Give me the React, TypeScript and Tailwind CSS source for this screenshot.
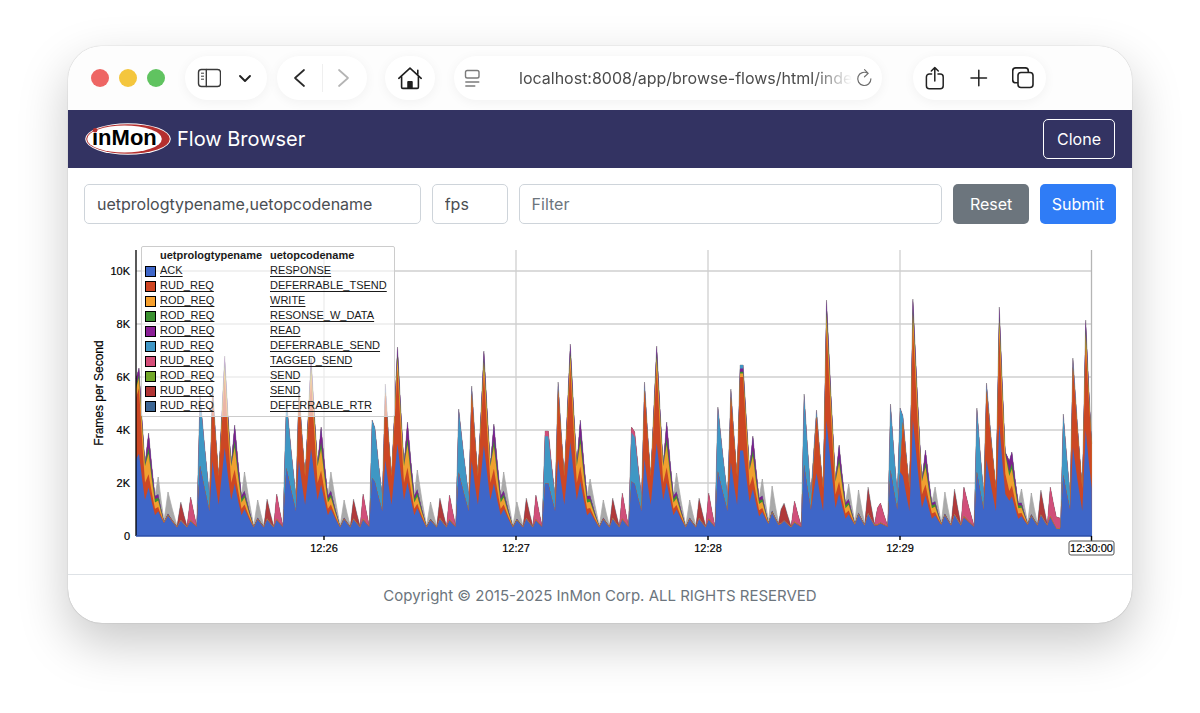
import type { ReactNode } from 'react'

const legend = [
  { type: 'ACK', opcode: 'RESPONSE', color: 'bg-[#3e66c8]' },
  { type: 'RUD_REQ', opcode: 'DEFERRABLE_TSEND', color: 'bg-[#cf4522]' },
  { type: 'ROD_REQ', opcode: 'WRITE', color: 'bg-[#f6a02d]' },
  { type: 'ROD_REQ', opcode: 'RESONSE_W_DATA', color: 'bg-[#3a9130]' },
  { type: 'ROD_REQ', opcode: 'READ', color: 'bg-[#8a1f96]' },
  { type: 'RUD_REQ', opcode: 'DEFERRABLE_SEND', color: 'bg-[#3f97c6]' },
  { type: 'RUD_REQ', opcode: 'TAGGED_SEND', color: 'bg-[#d44d78]' },
  { type: 'ROD_REQ', opcode: 'SEND', color: 'bg-[#73a829]' },
  { type: 'RUD_REQ', opcode: 'SEND', color: 'bg-[#b03434]' },
  { type: 'RUD_REQ', opcode: 'DEFERRABLE_RTR', color: 'bg-[#3c6694]' },
]

// Stacked bottom to top
const layers = [
  { name: 'response', fill: '#3e66c8' },
  { name: 'tsend', fill: '#cc4724' },
  { name: 'write', fill: '#f0a030' },
  { name: 'wdata', fill: '#3a9130' },
  { name: 'read', fill: '#7d1f8c' },
  { name: 'dsend', fill: '#3f97c4' },
  { name: 'tagged', fill: '#d04f7a' },
  { name: 'send', fill: '#b03a3a' },
  { name: 'rtr', fill: '#3d6794' },
  { name: 'other', fill: '#a9a9a9' },
]

// Cumulative share of each layer for a kind of sample
const mix: { [kind: string]: number[] } = {
  base: [0.9, 0.95, 0.95, 0.95, 0.95, 0.97, 0.98, 0.99, 0.99, 1],
  a: [0.5, 0.5, 0.5, 0.5, 0.5, 1, 1, 1, 1, 1],
  p: [0.5, 0.5, 0.5, 0.5, 0.5, 0.95, 1, 1, 1, 1],
  ab: [0.62, 0.63, 0.63, 0.63, 0.63, 1, 1, 1, 1, 1],
  b: [0.5, 0.95, 0.95, 0.95, 0.95, 1, 1, 1, 1, 1],
  bc: [0.52, 1, 1, 1, 1, 1, 1, 1, 1, 1],
  c: [0.49, 0.88, 0.94, 0.96, 1, 1, 1, 1, 1, 1],
  q: [0.5, 0.93, 0.95, 0.96, 0.98, 1, 1, 1, 1, 1],
  cd: [0.5, 0.74, 0.97, 0.99, 1, 1, 1, 1, 1, 1],
  d: [0.47, 0.6, 0.8, 0.86, 1, 1, 1, 1, 1, 1],
  de: [0.52, 0.68, 0.84, 0.92, 1, 1, 1, 1, 1, 1],
  e: [0.42, 0.49, 0.6, 0.65, 0.7, 0.7, 0.7, 0.7, 0.71, 1],
  low: [0.85, 0.89, 0.93, 0.94, 0.95, 0.95, 0.95, 0.95, 0.96, 1],
  f: [0.46, 0.47, 0.48, 0.49, 0.5, 0.5, 0.5, 0.5, 0.51, 1],
  g: [0.45, 0.46, 0.47, 0.47, 0.47, 0.47, 0.47, 0.98, 0.98, 1],
  h: [0.38, 0.4, 0.41, 0.41, 0.41, 0.41, 1, 1, 1, 1],
}

type Sample = [kind: string, x: number, height: number]

const PLOT_LEFT = 52
const PLOT_RIGHT = 1008
const BASE = 296
const PERIOD = 86.4
const FIRST = 112.7

// Bursts are 27 seconds apart; the peaks are named in the order they occur
function slowBurst(a: Sample[], b: number, c: Sample[], d: number, e: number, f: number, g: number, h: number): Sample[] {
  return [
    ...a, ['ab', 12.8, 40], ['b', 15.8, b], ['bc', 22, 60], ...c, ['cd', 34.5, 72], ['d', 38, d],
    ['de', 44.8, 40], ['e', 47.8, e], ['low', 57, 10], ['f', 61, f], ['low', 67.2, 10],
    ['g', 70.4, g], ['low', 77, 10], ['h', 80, h], ['base', 86.2, 10],
  ]
}

function fastBurst(a: number, b: Sample[], c: number, d: Sample[], e: number, f: number, g: number, h: Sample[]): Sample[] {
  return [
    ['a', 2.6, a], ['ab', 9.4, 42], ...b, ['bc', 21.6, 48], ['c', 25, c], ...d,
    ['de', 44, 33], ['e', 47.2, e], ['low', 53.4, 13], ['f', 57, f], ['low', 63.2, 12],
    ['g', 66.6, g], ['low', 73, 12], ...h, ['base', 86.2, 10],
  ]
}

const bursts: Sample[][] = [
  slowBurst([['a', 3.3, 141]], 150, [['c', 28, 180]], 111, 64, 36, 37, 42),
  slowBurst([['a', 3.3, 136]], 150, [['c', 28, 178]], 109, 64, 36, 37, 42),
  slowBurst([['a', 2.6, 116], ['a', 5.4, 108]], 152, [['c', 28, 189]], 114, 66, 34, 38, 41),
  slowBurst([['a', 2.8, 127]], 150, [['c', 28, 185]], 112, 64, 34, 38, 41),
  slowBurst([['p', 2.8, 105], ['p', 6, 105]], 154, [['c', 28, 192]], 116, 57, 36, 38, 43),
  slowBurst([['p', 2.8, 109], ['p', 6, 104]], 154, [['c', 28, 190]], 114, 63, 36, 38, 43),
  [
    ['a', 2.8, 129], ['ab', 12.4, 40], ['b', 15.8, 147], ['bc', 22, 60], ['q', 25, 171], ['q', 28, 171],
    ['cd', 34.5, 68], ['d', 37.8, 100], ['de', 44, 38], ['e', 47.2, 57], ['low', 53.4, 14], ['f', 57, 50],
    ['low', 63.4, 13], ['g', 66, 27], ['g', 69, 33], ['low', 76, 10], ['h', 79.4, 35], ['base', 86.2, 10],
  ],
  fastBurst(142, [['b', 15, 126]], 236, [['cd', 34, 56], ['d', 37.6, 91]], 52, 46, 49, [['h', 76, 28], ['h', 79, 33]]),
  fastBurst(132, [['a', 12.2, 128], ['b', 15, 120]], 237, [['cd', 34, 56], ['d', 37.6, 86]], 49, 44, 47, [['h', 76, 49]]),
  fastBurst(128, [['b', 12.2, 153]], 229, [['cd', 31, 84], ['d', 35, 75], ['d', 37.6, 84]], 47, 43, 46, [['h', 76, 49], ['h', 82, 19], ['h', 85.6, 18]]),
  [['a', 2.6, 122], ['ab', 9.4, 42], ['b', 12.2, 178], ['bc', 21.6, 48], ['c', 25, 216], ['bc', 31, 92]],
]

const lead: Sample[] = [
  ['c', 52, 157], ['c', 55, 168], ['cd', 61, 72], ['d', 64.6, 103], ['de', 71, 40], ['e', 74.2, 59], ['low', 80, 15],
  ['f', 84, 44], ['low', 93, 10], ['g', 96.8, 34], ['low', 103, 10], ['h', 106.6, 39], ['base', 112.7, 10],
]

const samples: Sample[] = [
  ...lead,
  ...bursts.flatMap((burst, i) => burst.map(([kind, x, h]): Sample => [kind, FIRST + i * PERIOD + x, h])),
]

// Cumulative heights, with an extra point that bows each long fall inwards
function expand() {
  const out: { x: number; tops: number[] }[] = []
  samples.forEach(([kind, x, h], i) => {
    const tops = mix[kind].map(share => share * h)
    if (i > 0) {
      const prev = out[out.length - 1]
      const last = prev.tops.length - 1
      if (prev.tops[last] - tops[last] > 20) {
        out.push({
          x: (prev.x + x) / 2,
          tops: tops.map((t, k) => t + (prev.tops[k] - t) * 0.47),
        })
      }
    }
    out.push({ x, tops })
  })
  return out
}

const points = expand()

function linePath(layer: number) {
  return 'M' + points.map(p => `${p.x.toFixed(1)},${(BASE - p.tops[layer]).toFixed(1)}`).join('L')
}

// Each area reaches down to the axis and is covered by the ones below it in the stack
function areaPath(layer: number) {
  return `${linePath(layer)}L${PLOT_RIGHT},${BASE}L${PLOT_LEFT},${BASE}Z`
}

const yTicks = [
  { label: '10K', y: 31 },
  { label: '8K', y: 84 },
  { label: '6K', y: 137 },
  { label: '4K', y: 190 },
  { label: '2K', y: 243 },
  { label: '0', y: 296 },
]

const xTicks = [
  { label: '12:26', x: 240 },
  { label: '12:27', x: 432 },
  { label: '12:28', x: 624 },
  { label: '12:29', x: 816 },
]

function Chart() {
  return (
    <svg className="block w-full h-auto" viewBox="0 0 1032 324" role="img" aria-label="Frames per second by operation">
      <g stroke="#cfcfcf" strokeWidth="1.3">
        {yTicks.slice(0, 5).map(t => (
          <line key={t.label} x1={PLOT_LEFT} x2={PLOT_RIGHT} y1={t.y} y2={t.y} />
        ))}
        {xTicks.map(t => (
          <line key={t.label} x1={t.x} x2={t.x} y1="10" y2={BASE} />
        ))}
        <line x1={PLOT_RIGHT - 0.5} x2={PLOT_RIGHT - 0.5} y1="10" y2={BASE} stroke="#b5b5b5" />
      </g>

      <path d={linePath(layers.length - 1)} fill="none" stroke="#555555" strokeOpacity="0.6" strokeWidth="0.6" strokeLinejoin="bevel" />
      {layers.map((layer, i) => (
        <path key={layer.name} d={areaPath(i)} fill={layer.fill} />
      )).reverse()}

      <line x1={PLOT_LEFT} x2={PLOT_LEFT} y1="10" y2={BASE} stroke="#000" strokeWidth="1.3" />
      <line x1={PLOT_LEFT} x2={PLOT_RIGHT} y1={BASE} y2={BASE} stroke="#2d4fa8" strokeWidth="1.4" />

      <g className="text-[11px] font-['Liberation_Sans',sans-serif]" fill="#000" stroke="#000" strokeWidth="0.2">
        {yTicks.map(t => (
          <text key={t.label} x="46" y={t.y + 4} textAnchor="end">{t.label}</text>
        ))}
        {xTicks.map(t => (
          <text key={t.label} x={t.x} y="312" textAnchor="middle">{t.label}</text>
        ))}
      </g>
      <g stroke="#000" strokeWidth="1.4">
        {xTicks.map(t => (
          <line key={t.label} x1={t.x} x2={t.x} y1={BASE} y2="300" />
        ))}
        <line x1={PLOT_RIGHT - 0.5} x2={PLOT_RIGHT - 0.5} y1={BASE} y2="301" />
      </g>

      <rect x="985" y="301" width="45" height="14" rx="2" fill="#fff" stroke="#555" />
      <text className="text-[11px] font-['Liberation_Sans',sans-serif]" x="1007.5" y="312" textAnchor="middle" stroke="#000" strokeWidth="0.2">
        12:30:00
      </text>
      <text
        className="text-[12px] font-['Liberation_Sans',sans-serif]"
        transform="translate(19 153) rotate(-90)"
        textAnchor="middle"
        stroke="#000"
        strokeWidth="0.2"
      >
        Frames per Second
      </text>
    </svg>
  )
}

function Legend() {
  return (
    <div className="absolute left-[57px] top-[6px] w-[254px] rounded-xs border border-[#cccccc] bg-white/60 pt-px pb-[3px] pl-[3px] font-['Liberation_Sans',sans-serif] text-[11px] leading-[15px] text-[#1a1a1a]">
      <table className="w-full text-left">
        <thead>
          <tr>
            <td className="w-[15px] p-0" />
            <th className="w-[110px] p-0 font-bold">uetprologtypename</th>
            <th className="p-0 font-bold">uetopcodename</th>
          </tr>
        </thead>
        <tbody>
          {legend.map(row => (
            <tr key={row.type + row.opcode}>
              <td className="p-0">
                <div className={`mt-px size-[11px] border border-black ${row.color}`} />
              </td>
              <td className="p-0"><a href="#" className="underline underline-offset-2">{row.type}</a></td>
              <td className="p-0"><a href="#" className="underline underline-offset-2">{row.opcode}</a></td>
            </tr>
          ))}
        </tbody>
      </table>
    </div>
  )
}

function Logo() {
  return (
    <svg className="h-8 w-[86px]" viewBox="0 0 86 32" aria-label="inMon">
      <ellipse cx="43" cy="16" rx="42.8" ry="15.8" fill="#fff" />
      <ellipse cx="43" cy="16" rx="41.8" ry="14.8" fill="#b5302f" />
      <ellipse cx="39.5" cy="16" rx="37.3" ry="13.4" fill="#fff" />
      <text x="7" y="22" className="text-[22px] font-bold font-['Liberation_Sans',sans-serif]" fill="#000">inMon</text>
      <circle cx="10.1" cy="7.2" r="2.3" fill="#b5302f" />
    </svg>
  )
}

function Pill({ className, children }: { className: string; children: ReactNode }) {
  return (
    <div className={`flex h-11 items-center rounded-full bg-white shadow-[0_2px_12px_rgba(0,0,0,0.05)] ${className}`}>
      {children}
    </div>
  )
}

function Icon({ label, className, children }: { label: string; className: string; children: ReactNode }) {
  return (
    <button type="button" aria-label={label} className={className}>
      <svg className="size-6" viewBox="0 0 24 24" fill="none" stroke="currentColor" strokeLinecap="round" strokeLinejoin="round" strokeWidth="1.4">
        {children}
      </svg>
    </button>
  )
}

function Toolbar() {
  return (
    <div className="flex h-16 items-center bg-[#fdfdfd] pl-[23px] pr-[86px]">
      <div className="flex gap-[10px]">
        <button type="button" aria-label="Close" className="size-[18px] rounded-full bg-[#ee6664]" />
        <button type="button" aria-label="Minimize" className="size-[18px] rounded-full bg-[#f4c63d]" />
        <button type="button" aria-label="Zoom" className="size-[18px] rounded-full bg-[#60c360]" />
      </div>

      {/* Sidebar */}
      <Pill className="ml-5 w-[82px] gap-3 px-3 text-[#3a3a3a]">
        <Icon label="Sidebar" className="">
          <rect x="1.5" y="3.5" width="22" height="17" rx="3" />
          <path d="M9.3 3.5v17" />
          <path d="M4.4 7.2h2.2M4.4 10.2h2.2M4.4 13.2h2.2" strokeWidth="1" />
        </Icon>
        <Icon label="Tab groups" className="text-[#222]">
          <path d="M7 10l5 5 5-5" strokeWidth="1.9" />
        </Icon>
      </Pill>

      {/* History */}
      <Pill className="ml-[10px] w-[90px] justify-between px-[11px]">
        <Icon label="Back" className="text-[#2a2a2a]">
          <path d="M16 4l-9 8 9 8" strokeWidth="1.7" />
        </Icon>
        <span className="h-7 w-px bg-[#efefef]" />
        <Icon label="Forward" className="text-[#b4b4b4]">
          <path d="M7 4l9 8-9 8" strokeWidth="1.7" />
        </Icon>
      </Pill>

      <Pill className="ml-[18px] w-[50px] justify-center text-[#1f1f1f]">
        <Icon label="Home" className="">
          <path d="M.8 12.3L12 2.2l11.2 10.1M19.8 8.6V4.2" strokeWidth="1.6" />
          <path d="M3.6 10.8v10.4c0 .7.5 1.2 1.2 1.2h14.4c.7 0 1.2-.5 1.2-1.2V10.8" strokeWidth="1.6" />
          <path d="M9.8 22v-6.5h4.4V22z" fill="currentColor" strokeWidth="1" />
        </Icon>
      </Pill>

      {/* Address bar */}
      <Pill className="ml-[19px] min-w-0 flex-1 px-[6px]">
        <Icon label="Page menu" className="text-[#7b7b7b]">
          <rect x="5.5" y="4.5" width="13.5" height="7.5" rx="1.8" />
          <path d="M5.800 16h13M5.800 20h9" />
        </Icon>
        <input
          aria-label="Address"
          className="ml-[35px] min-w-0 flex-1 bg-transparent font-['Inter',sans-serif] text-[16px] text-[#4c4c4c] outline-none [mask-image:linear-gradient(to_right,#000_88%,transparent_100%)]"
          defaultValue="localhost:8008/app/browse-flows/html/index.html"
        />
        <Icon label="Reload" className="text-[#6f6f6f]">
          <path d="M15.8 7.3A6.6 6.6 0 1 0 18.9 12.8M12.5 3.7l3.7 3.7-3.7 3.4" strokeWidth="1.2" />
        </Icon>
      </Pill>

      <Pill className="ml-[31px] w-[133px] justify-between px-[10px] text-[#222]">
        <Icon label="Share" className="">
          <path d="M8.6 8H6.4a3 3 0 0 0-3 3v8.8a3 3 0 0 0 3 3h10.8a3 3 0 0 0 3-3V11a3 3 0 0 0-3-3H15" strokeWidth="1.5" />
          <path d="M11.8 15V1.6M8.3 5l3.5-3.4L15.3 5" strokeWidth="1.5" />
        </Icon>
        <Icon label="New tab" className="">
          <path d="M3 12h15.5M10.8 4.2v15.6" strokeWidth="1.5" />
        </Icon>
        <Icon label="Show tabs" className="">
          <rect x="6" y="6.5" width="15" height="15" rx="3" strokeWidth="1.6" />
          <path d="M5.5 16.8H3.7a3 3 0 0 1-3-3V4.9a3 3 0 0 1 3-3h9.6a3 3 0 0 1 3 3v1.2" strokeWidth="1.6" />
        </Icon>
      </Pill>
    </div>
  )
}

export default function App() {
  return (
    <div className="min-h-screen bg-white px-[68px] pt-[46px] pb-[88px] font-['Inter',sans-serif]">
      <div className="overflow-hidden rounded-[34px] bg-white shadow-[0_0_1px_rgba(0,0,0,0.4),0_20px_50px_rgba(0,0,0,0.22)]">
        <Toolbar />

        <header className="flex h-[58px] items-center justify-between bg-[#333362] px-[17px]">
          <a href="#" className="flex items-center gap-[6px] text-[20px] text-white">
            <Logo />
            Flow Browser
          </a>
          <button type="button" className="h-10 w-[72px] rounded-[5px] border border-white text-[16px] text-white">
            Clone
          </button>
        </header>

        <main className="px-4 pt-4 pb-[10px]">
          <form className="grid grid-cols-12 gap-[11px] text-[16px] text-[#4a4e52]" onSubmit={e => e.preventDefault()}>
            <input aria-label="Keys" className="col-span-4 h-10 min-w-0 rounded-[5px] border border-[#ced4da] px-3" defaultValue="uetprologtypename,uetopcodename" />
            <input aria-label="Value" className="h-10 min-w-0 rounded-[5px] border border-[#ced4da] px-3" defaultValue="fps" />
            <input aria-label="Filter" className="col-span-5 h-10 min-w-0 rounded-[5px] border border-[#ced4da] px-3 placeholder:text-[#6c757d]" placeholder="Filter" />
            <button type="reset" className="h-10 rounded-[5px] bg-[#6c757d] text-white">Reset</button>
            <button type="submit" className="h-10 rounded-[5px] bg-[#2f7cf6] text-white">Submit</button>
          </form>

          <div className="relative mt-4">
            <Chart />
            <Legend />
          </div>
        </main>

        <footer className="border-t border-[#dee2e6] pt-[9px] pb-[15px] text-center text-[15px] leading-6 text-[#6c757d]">
          Copyright © 2015-2025 InMon Corp. ALL RIGHTS RESERVED
        </footer>
      </div>
    </div>
  )
}
